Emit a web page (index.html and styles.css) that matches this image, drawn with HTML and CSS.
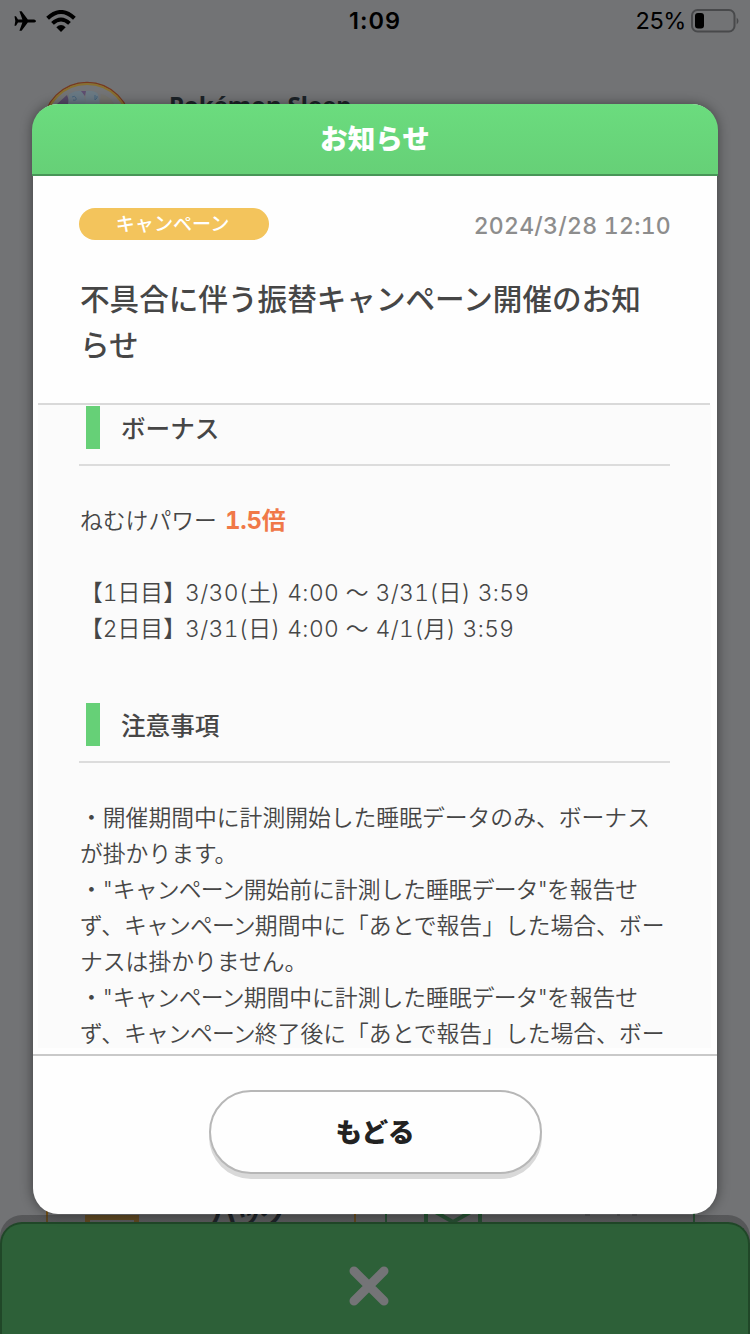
FILE: index.html
```html
<!DOCTYPE html>
<html lang="ja">
<head>
<meta charset="utf-8">
<title>お知らせ</title>
<link rel="stylesheet" href="styles.css">
</head>
<body>
<div class="screen">
  <header class="status">
    <div class="status-left">
      <svg class="plane" viewBox="0 0 22 20"><path d="M22 10c0-1-1.500-1.600-3-1.600h-5.200L7.600.3H5.400l3 8.100H4L2 5.200H.5l.8 4.800-.8 4.800H2l2-3.200h4.400l-3 8.100h2.200l6.200-8.100H19c1.500 0 3-.6 3-1.600z"/></svg>
      <svg class="wifi" viewBox="0 0 30 22"><g fill="none" stroke="#000" stroke-width="4"><path d="M1.600 8.300Q15-4.300 28.400 8.300"/><path d="M6.500 13.400q8.500-7.800 17 0"/></g><path d="M10.300 17.200q4.700-4.200 9.400 0L15 22z"/></svg>
    </div>
    <div class="clock">1:09</div>
    <div class="status-right"><span class="percent">25%</span>
      <svg class="battery" viewBox="0 0 48 24"><rect x="1" y="1" width="42.500" height="21.500" rx="5.500" fill="none" stroke="#48494b" stroke-width="2"/><rect x="4" y="4" width="9" height="15.500" rx="3" fill="#000"/><path d="M45.700 8.500q3.600 3.300 0 7z" fill="#48494b"/></svg>
    </div>
  </header>
  <div class="profile">
    <svg class="avatar" viewBox="0 0 90 90"><circle cx="45" cy="45" r="43.500" fill="#737476" stroke="#77391f" stroke-width="1.500"/><circle cx="45" cy="45" r="42" fill="none" stroke="#887030" stroke-width="2"/><path d="M15 23 25 14l3 9z" fill="#554968"/><path d="M27 13q7-4 14-3l3 14H26z" fill="#697984"/><path d="M39 10h5l-1 5z" fill="#5e4e70"/><path d="M44 10q8-1 12 3l2 11H43z" fill="#6b7a84"/><path d="M59 13q9 2 13 10H58z" fill="#74736d"/><path d="M30 16q3-2 4 1t-3 2M53 14v5q3-2 2-4" fill="none" stroke="#47647c"/></svg>
    <span class="player">Pokémon Sleep</span>
  </div>
  <main class="menu">
    <div class="card bag"><svg class="card-icon" viewBox="0 0 54 30"><path d="M2.500 30V3.500h49V30" fill="none" stroke="#7a5518" stroke-width="5"/></svg><span>バッグ</span></div>
    <div class="card mail"><svg class="card-icon" viewBox="0 0 58 30"><path d="M2 30V0M56 30V0M8-4l21 12L50-4" fill="none" stroke="#225d32" stroke-width="4"/></svg><svg class="marks" viewBox="0 0 74 10"><path d="M9 9h6m4 0h3m38 0h3M20 1h5m27 0h3m12 0h5" stroke="#4a4d51" stroke-width="1"/></svg></div>
  </main>
  <footer class="drawer"><div class="drawer-panel"><svg class="cross" viewBox="0 0 40 40"><path d="M5 5l30 30M35 5 5 35" stroke="#747477" stroke-width="9" stroke-linecap="round"/></svg></div></footer>

  <section class="dialog">
    <h1 class="dialog-title">お知らせ</h1>
    <div class="notice">
      <div class="notice-head">
        <div class="meta"><span class="badge">キャンペーン</span><time class="date">2024/3/28 12:10</time></div>
        <h2 class="headline">不具合に伴う振替キャンペーン開催のお知<br>らせ</h2>
      </div>
      <div class="article">
        <h3 class="section first"><span>ボーナス</span></h3>
        <p class="power">ねむけパワー <strong>1.5倍</strong></p>
        <p class="days"><span class="day">【1日目】</span><span class="d1">3/30(土) 4:00 〜 3/31(日) 3:59</span><br><span class="day">【2日目】</span><span class="d1">3/31(日) 4:00 〜 4/1(月) 3:59</span></p>
        <h3 class="section second"><span>注意事項</span></h3>
        <p class="rules">・開催期間中に計測開始した睡眠データのみ、ボーナス<br>が掛かります。<br>・"<span class="kana">キャンペーン</span>開始前に計測した睡眠<span class="kana">データ"</span>を報告せ<br>ず、<span class="kana">キャンペーン</span>期間中に「あとで報告」した場合、ボー<br>ナスは掛かりません。<br>・"<span class="kana">キャンペーン</span>期間中に計測した睡眠<span class="kana">データ"</span>を報告せ<br>ず、<span class="kana">キャンペーン</span>終了後に「あとで報告」した場合、ボー</p>
      </div>
    </div>
    <div class="actions"><button class="back">もどる</button></div>
  </section>
</div>
</body>
</html>
```
FILE: styles.css
```css
* { box-sizing: border-box; }
body, h1, h2, h3, p { margin: 0; }
body { font-family: "Noto Sans CJK JP", sans-serif; color: #464646; }
svg { display: block; flex: none; }
.screen { position: relative; width: 750px; height: 1334px; overflow: hidden; background: #727375; display: flex; flex-direction: column; }

.status { height: 40px; display: grid; grid-template-columns: 1fr 100px 1fr; align-items: center; font-family: Inter, sans-serif; color: #000; }
.status-left { display: flex; gap: 10px; padding-left: 14px; align-items: center; }
.plane { width: 22px; height: 20px; }
.wifi { width: 30px; height: 22px; }
.clock { text-align: center; font-size: 23.500px; font-weight: 600; letter-spacing: 1px; line-height: 42px; }
.status-right { display: flex; justify-content: flex-end; align-items: center; padding-right: 11px; gap: 5px; }
.percent { font-size: 23.500px; line-height: 42px; letter-spacing: -.4px; }
.battery { width: 48px; height: 24px; }

.profile { display: flex; gap: 37px; padding: 41px 0 0 42px; height: 150px; }
.avatar { width: 90px; height: 90px; }
.player { font: bold 24px/30px "Noto Sans", sans-serif; color: #1c2328; padding-top: 9px; letter-spacing: -.1px; }
.menu { flex: 1; display: flex; align-items: flex-end; gap: 29px; padding-left: 46px; }
.card { width: 310px; height: 60px; border: solid #7a5518; border-width: 2px 2px 0; display: flex; }
.card-icon { width: 54px; height: 30px; margin: 50px 0 0 37px; }
.bag span { font-size: 27px; font-weight: 700; line-height: 30px; letter-spacing: -2px; color: #141b22; margin: 35px 0 0 71px; }
.mail { border-color: #225d32; }
.mail .card-icon { width: 58px; }
.marks { width: 74px; height: 10px; margin: 50px 0 0 83px; }
.drawer { height: 119px; margin-top: -7px; padding-top: 7px; border-radius: 22px 22px 0 0; background: linear-gradient(rgba(45,46,47,.4), rgba(45,46,47,.4)); }
.drawer-panel { height: 112px; border: 2px solid #204728; border-bottom: 0; border-radius: 22px 22px 0 0; background: #2d6038; display: flex; justify-content: center; padding: 42px 12px 0 0; }
.cross { width: 40px; height: 40px; }

.dialog { position: absolute; left: 32px; top: 104px; width: 686px; height: 1110px; display: flex; flex-direction: column; padding: 0 1px; background: #fefefe; background-clip: content-box; border-radius: 26px; box-shadow: 0 0 12px rgba(0,0,0,.42); }
.dialog-title { height: 72px; margin: 0 -1px; border-radius: 26px 26px 0 0; border-bottom: 2px solid #489558; background: linear-gradient(#6bdc7e, #66d077); color: #fff; text-align: center; font-size: 27.600px; font-weight: 900; line-height: 66px; }
.notice { height: 874px; padding: 0 6px 0 5px; }
.notice-head { height: 229px; width: 672px; padding: 31px 40px 0 41px; border-bottom: 2px solid #d9d9d9; }
.meta { display: flex; justify-content: space-between; align-items: center; height: 33px; }
.badge { width: 190px; height: 32px; border-radius: 16px; background: #f3c45c; color: #fff; text-align: center; font-size: 19.100px; font-weight: 500; line-height: 30px; padding-right: 3px; }
.date { font: 500 23px/34px Inter, sans-serif; font-variant-numeric: tabular-nums; letter-spacing: .27px; color: #8d8d8d; padding-top: 4px; margin-right: -1px; }
.headline { font-size: 29.600px; line-height: 45.500px; font-weight: 500; padding: 35px 0 0 1px; white-space: nowrap; }
.article { height: 643px; padding: 1px 41px 0; background: #fbfbfb; overflow: hidden; white-space: nowrap; }
.section { height: 60px; border-bottom: 2px solid #dcdcdc; padding-left: 7px; font-size: 24.600px; font-weight: 500; }
.section span { display: block; height: 43px; line-height: 42px; border-left: 14px solid #66d077; padding-left: 21px; }
.power, .days, .rules { font-family: Inter, "Noto Sans CJK JP", sans-serif; font-variant-numeric: tabular-nums; font-size: 22.800px; line-height: 36px; padding: 37px 0 0 1px; font-weight: 350; }
.power { height: 73px; }
.power strong { color: #f07848; font-weight: 700; font-size: 24px; padding-left: 2px; letter-spacing: -.2px; }
.days { height: 109px; padding-top: 36px; }
.day { display: inline-block; width: 105px; }
.d1 { letter-spacing: .41px; }
.second { margin-top: 55px; }
.kana { letter-spacing: -.8px; }
.actions { flex: 1; margin-top: 4px; border-top: 2px solid #c9c9c9; display: flex; justify-content: center; align-items: flex-start; padding-top: 34px; }
.back { width: 333px; height: 84px; border: 2px solid #b7b7b7; border-radius: 42px; background: #fefefe; box-shadow: 0 5px 0 #d9d9d9; color: #222; font: 900 26.600px/76px "Noto Sans CJK JP", sans-serif; padding: 0 0 2px; }
```
